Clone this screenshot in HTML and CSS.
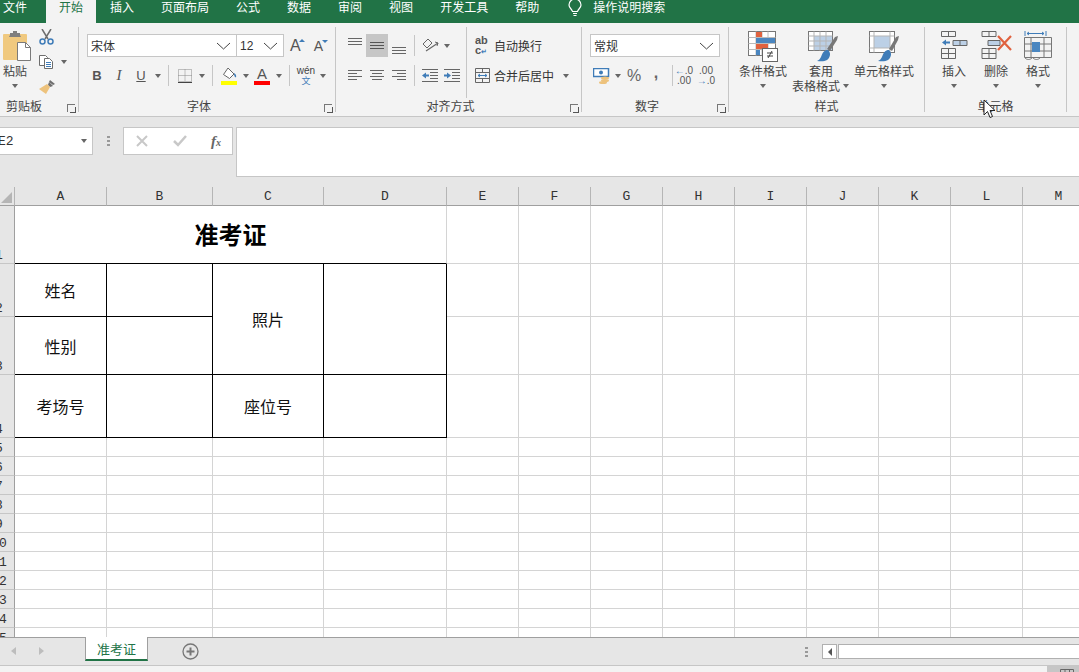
FILE: index.html
```html
<!DOCTYPE html>
<html lang="zh-CN">
<head>
  <meta charset="UTF-8">
  <title>准考证 - Excel</title>
  <link rel="stylesheet" href="styles.css">
</head>
<body>
<div class="app">

  <!-- 菜单栏 -->
  <div class="menu">
    <span class="tab tab-file">文件</span>
    <span class="tab active">开始</span>
    <span class="tab">插入</span>
    <span class="tab">页面布局</span>
    <span class="tab">公式</span>
    <span class="tab">数据</span>
    <span class="tab">审阅</span>
    <span class="tab">视图</span>
    <span class="tab">开发工具</span>
    <span class="tab">帮助</span>
    <svg class="bulb" width="14" height="17" viewBox="0 0 14 17" fill="none" stroke="#fff" stroke-width="1.2"><path d="M4.500 11.500C4 9 1 8 1 5a6 6 0 0 1 12 0c0 3-3 4-3.500 6.500z"/><path d="M5 13.500h4M5.500 15.500h3"/></svg>
    <span class="search">操作说明搜索</span>
  </div>

  <!-- 功能区 -->
  <div class="ribbon">

    <div class="group g-clip">
      <div class="body">
        <div class="big big-paste">
          <svg width="28" height="31" viewBox="0 0 28 31"><rect x="0" y="3" width="24" height="26" rx="1" fill="#f0c97f"/><path d="M7 4V2h3V0h4v2h3v2l1 2H6z" fill="#7f7f7f"/><path d="M14.500 11.500h8l5 5v13h-13z" fill="#fff" stroke="#7a7a7a"/><path d="M22.500 11.500v5h5" fill="none" stroke="#7a7a7a"/></svg>
          <span class="big-text">粘贴</span>
          <i class="caret big-caret"></i>
        </div>
        <div class="clip-tools">
          <svg width="15" height="16" viewBox="0 0 15 16" fill="none"><path d="M3 0l6 10M12 0L6 10" stroke="#6d6d6d" stroke-width="1.500"/><circle cx="3.500" cy="12.500" r="2.500" stroke="#3f7cb8" stroke-width="1.500"/><circle cx="11.500" cy="12.500" r="2.500" stroke="#3f7cb8" stroke-width="1.500"/></svg>
          <div class="clip-copy">
            <svg width="15" height="14" viewBox="0 0 15 14" fill="#fff" stroke="#6d6d6d"><path d="M.5.500h6l2 2v8h-8z"/><path d="M5.500 3.500h5l3 3v7h-8z"/><path d="M7 7.500h5M7 9.500h5M7 11.500h5" stroke="#3f7cb8"/></svg>
            <i class="caret"></i>
          </div>
          <svg width="17" height="16" viewBox="0 0 17 16"><path d="M10 3l4 4-3 1-2-2z" fill="#6d6d6d"/><path d="M11 1l5 4-2 1-4-3z" fill="#6d6d6d"/><path d="M8 5l3 3-4 7-7-5z" fill="#edc27c"/></svg>
        </div>
      </div>
      <div class="label">剪贴板</div>
      <i class="launch"></i>
    </div>

    <div class="group g-font">
      <div class="tools">
        <div class="row">
          <div class="combo c-name"><span>宋体</span><svg width="15" height="8" viewBox="0 0 15 8" fill="none" stroke="#444"><path d="M1 1l6.500 6L14 1"/></svg></div>
          <div class="combo c-size"><span>12</span><svg width="15" height="8" viewBox="0 0 15 8" fill="none" stroke="#444"><path d="M1 1l6.500 6L14 1"/></svg></div>
          <span class="grow">A<i class="up"></i></span>
          <span class="shrink">A<i class="down"></i></span>
        </div>
        <div class="row">
          <span class="btn fmt"><b>B</b></span>
          <span class="btn fmt"><em>I</em></span>
          <span class="btn fmt"><u>U</u></span>
          <span class="cb"><i class="caret"></i></span>
          <i class="sep"></i>
          <span class="btn"><svg width="14" height="14" viewBox="0 0 14 14" fill="none" stroke="#888" stroke-dasharray="1 1"><path d="M.5.500h13v12H.5zM7 .5v12M.5 6.500h13"/><path d="M0 13.500h14" stroke="#444" stroke-dasharray="none"/></svg></span>
          <span class="cb"><i class="caret"></i></span>
          <i class="sep"></i>
          <span class="btn"><svg width="16" height="18" viewBox="0 0 16 18"><path d="M7 1l6 6-4.500 4.500-6-4z" fill="#fff" stroke="#666"/><path d="M13 6c2 1 2.500 3 2 4.500-1.500-.5-2-2-2-4.500z" fill="#3f7cb8"/><rect y="14" width="16" height="4" fill="#ff0"/></svg></span>
          <span class="cb"><i class="caret"></i></span>
          <span class="btn"><span class="color-a">A</span></span>
          <span class="cb"><i class="caret"></i></span>
          <i class="sep"></i>
          <span class="btn wen"><span class="wen-top">wén</span><span class="wen-bot">文</span></span>
          <span class="cb"><i class="caret"></i></span>
        </div>
      </div>
      <div class="label">字体</div>
      <i class="launch"></i>
    </div>

    <div class="group g-align">
      <div class="align-wrap">
        <div class="tools align-left">
          <div class="row">
            <span class="btn"><svg width="14" height="18" viewBox="0 0 14 18" stroke="#666"><path d="M0 1.500h14M0 4.500h14M0 7.500h14"/></svg></span>
            <span class="btn selected"><svg width="14" height="18" viewBox="0 0 14 18" stroke="#555"><path d="M0 5.500h14M0 8.500h14M0 11.500h14"/></svg></span>
            <span class="btn"><svg width="14" height="18" viewBox="0 0 14 18" stroke="#666"><path d="M0 10.500h14M0 13.500h14M0 16.500h14"/></svg></span>
            <i class="sep"></i>
            <span class="btn"><svg width="17" height="15" viewBox="0 0 17 15" fill="none" stroke="#666"><path d="M1 6l5-5 4 4-5 5z"/><path d="M4 13L16 5" stroke-width="1.200"/><path d="M13 4l3 1-1 3"/></svg></span>
            <span class="cb"><i class="caret"></i></span>
          </div>
          <div class="row">
            <span class="btn"><svg width="14" height="11" viewBox="0 0 14 11" stroke="#666"><path d="M0 .5h14M0 3.500h9M0 6.500h14M0 9.500h9"/></svg></span>
            <span class="btn"><svg width="14" height="11" viewBox="0 0 14 11" stroke="#666"><path d="M0 .5h14M2 3.500h10M0 6.500h14M2 9.500h10"/></svg></span>
            <span class="btn"><svg width="14" height="11" viewBox="0 0 14 11" stroke="#666"><path d="M0 .5h14M5 3.500h9M0 6.500h14M5 9.500h9"/></svg></span>
            <i class="sep"></i>
            <span class="btn"><svg width="16" height="13" viewBox="0 0 16 13"><path d="M0 .5h16M8 3.500h8M8 6.500h8M8 9.500h8M0 12.500h16" stroke="#666"/><path d="M0 6.500l4-3v2h3v2H4v2z" fill="#3f7cb8"/></svg></span>
            <span class="btn"><svg width="16" height="13" viewBox="0 0 16 13"><path d="M0 .5h16M8 3.500h8M8 6.500h8M8 9.500h8M0 12.500h16" stroke="#666"/><path d="M7 6.500l-4-3v2H0v2h3v2z" fill="#3f7cb8"/></svg></span>
          </div>
        </div>
        <div class="tools align-right">
          <div class="row text-btn">
            <span class="wrap-ic"><span>ab</span><span>c<i>↵</i></span></span>
            <span>自动换行</span>
          </div>
          <div class="row text-btn">
            <svg class="merge-ic" width="15" height="15" viewBox="0 0 15 15" fill="none" stroke="#666"><path d="M.5.500h14v14H.5zM.5 4.500h14M.5 10.500h14M7.500.5v4M7.500 10.500v4"/><path d="M3 7.500h9M3 7.500l2-1.500M3 7.500L5 9M12 7.500L10 6M12 7.500L10 9" stroke="#3f7cb8"/></svg>
            <span>合并后居中</span>
            <i class="caret merge-caret"></i>
          </div>
        </div>
      </div>
      <div class="label">对齐方式</div>
      <i class="launch"></i>
    </div>

    <div class="group g-num">
      <div class="tools">
        <div class="row">
          <div class="combo c-num"><span>常规</span><svg width="15" height="8" viewBox="0 0 15 8" fill="none" stroke="#444"><path d="M1 1l6.500 6L14 1"/></svg></div>
        </div>
        <div class="row">
          <span class="btn"><svg width="17" height="16" viewBox="0 0 17 16"><rect x=".5" y=".5" width="15" height="8" fill="#fff" stroke="#3f7cb8" stroke-width="1.500"/><circle cx="8" cy="4.500" r="2" fill="#3f7cb8"/><ellipse cx="12" cy="10" rx="4" ry="1.500" fill="#edc27c"/><ellipse cx="12" cy="12.500" rx="4" ry="1.500" fill="#edc27c"/><ellipse cx="10" cy="14.500" rx="4" ry="1.500" fill="#edc27c"/></svg></span>
          <span class="cb"><i class="caret"></i></span>
          <span class="btn num-sym">%</span>
          <span class="btn num-sym comma">,</span>
          <i class="sep sep-dec"></i>
          <span class="dec"><span><i>←</i>.0</span><span>.00</span></span>
          <span class="dec"><span>.00</span><span><i>→</i>.0</span></span>
        </div>
      </div>
      <div class="label">数字</div>
      <i class="launch"></i>
    </div>

    <div class="group g-style">
      <div class="body">
        <div class="big b-cond">
          <svg width="30" height="31" viewBox="0 0 30 31"><rect x=".5" y=".5" width="27" height="24" fill="#fff" stroke="#777"/><path d="M8 .5v24M14 .5v24M20 .5v24M.5 6.500h27M.5 12.500h27M.5 18.500h27" stroke="#bbb"/><rect x="8" y="1" width="6" height="5" fill="#e0623f"/><rect x="8" y="7" width="19" height="5" fill="#4a86c0"/><rect x="8" y="13" width="12" height="5" fill="#e0623f"/><rect x="8" y="19" width="4" height="5" fill="#4a86c0"/><rect x="14.500" y="17.500" width="15" height="13" fill="#fff" stroke="#666"/><path d="M19 22h6M19 25h6M24 20l-4 7" stroke="#444" fill="none"/></svg>
          <span class="big-text">条件格式</span>
          <i class="caret big-caret"></i>
        </div>
        <div class="big b-table">
          <svg width="30" height="31" viewBox="0 0 30 31"><rect x=".5" y=".5" width="24" height="19" fill="#fff" stroke="#777"/><rect x="6" y="5" width="18" height="14" fill="#bcd0e6"/><path d="M6 .5v19M12 .5v19M18 .5v19M.5 5h24M.5 10h24M.5 15h24" stroke="#b5b5b5"/><path d="M19 18l8-12 3-1-1 4-7 11z" fill="#777"/><path d="M20 19c-4 0-5 2-7 7-1 2-2 3-4 4 7 1 12 0 13-6 .2-2-.5-4-2-5z" fill="#3f7cb8"/></svg>
          <span class="big-text table-top">套用</span>
          <span class="big-text table-line">表格格式<i class="caret"></i></span>
        </div>
        <div class="big b-cell">
          <svg width="30" height="31" viewBox="0 0 30 31"><rect x=".5" y=".5" width="25" height="21" fill="#fff" stroke="#777"/><rect x="5" y="5" width="16" height="12" fill="#bcd0e6"/><path d="M5 .5v21M21 .5v21M.5 5h25M.5 17h25" stroke="#b5b5b5"/><path d="M20 18l7-12 3-1-1 4-6 11z" fill="#777"/><path d="M20 19c-4 0-5 2-7 7-1 2-2 3-4 4 7 1 12 0 13-6 .2-2-.5-4-2-5z" fill="#3f7cb8"/></svg>
          <span class="big-text">单元格样式</span>
          <i class="caret big-caret"></i>
        </div>
      </div>
      <div class="label">样式</div>
    </div>

    <div class="group g-cells">
      <div class="body">
        <div class="big b-c">
          <svg width="27" height="31" viewBox="0 0 27 31" fill="none" stroke="#666"><path d="M.5.500h14v5H.5zM7.500.5v5M.5 17.500h14v10H.5zM.5 22.500h14M7.500 17.500v10"/><path d="M12 9.500h14v5H12zM19 9.500v5" fill="#bcd0e6"/><path d="M1 11.500l4-3v2h4v2H5v2z" fill="#3f7cb8" stroke="none"/></svg>
          <span class="big-text">插入</span>
          <i class="caret big-caret"></i>
        </div>
        <div class="big b-c">
          <svg width="31" height="31" viewBox="0 0 31 31" fill="none" stroke="#666"><path d="M1 .5h14v5H1zM8 .5v5M1 17.500h14v10H1zM1 22.500h14M8 17.500v10"/><path d="M7 9.500h12v5H7z" fill="#bcd0e6"/><path d="M17 5l13 14M30 5L17 19" stroke="#e0623f" stroke-width="2.200"/></svg>
          <span class="big-text">删除</span>
          <i class="caret big-caret"></i>
        </div>
        <div class="big b-c">
          <svg width="28" height="31" viewBox="0 0 28 31" fill="none"><path d="M1 0v5M22 0v5M3 2.500h17M3 2.500l2-1.500M3 2.500L5 4M20 2.500L18 1M20 2.500L18 4" stroke="#3f7cb8"/><path d="M.5 6.500h27v20H.5zM7 6.500v20M20 6.500v20M.5 13h27M.5 20h27" stroke="#777"/><rect x="8" y="11" width="8" height="10" fill="#4a86c0"/><path d="M1 27c2 2 5 2 7 0M9 27c2 2 5 2 7 0" stroke="#777"/></svg>
          <span class="big-text">格式</span>
          <i class="caret big-caret"></i>
        </div>
      </div>
      <div class="label">单元格</div>
    </div>
  </div>

  <!-- 编辑栏 -->
  <div class="formula">
    <div class="namebox"><span>E2</span><i class="caret"></i></div>
    <span class="vdots"></span>
    <div class="fxbox">
      <svg width="14" height="12" viewBox="0 0 14 12" fill="none" stroke="#c8c8c8" stroke-width="2"><path d="M2 1l10 10M12 1L2 11"/></svg>
      <svg width="14" height="12" viewBox="0 0 14 12" fill="none" stroke="#c8c8c8" stroke-width="2.500"><path d="M1 6l4 4 8-9"/></svg>
      <span class="fx">f<small>x</small></span>
    </div>
    <div class="fxinput"></div>
  </div>

  <!-- 工作表 -->
  <div class="sheet-wrap">
    <div class="sheet">
      <div class="corner"><i></i></div><div class="ch">A</div><div class="ch">B</div><div class="ch">C</div><div class="ch">D</div><div class="ch">E</div><div class="ch">F</div><div class="ch">G</div><div class="ch">H</div><div class="ch">I</div><div class="ch">J</div><div class="ch">K</div><div class="ch">L</div><div class="ch">M</div>

      <div class="rh"><span>1</span></div><div class="title">准考证</div><div></div><div></div><div></div><div></div><div></div><div></div><div></div><div></div><div></div>
      <div class="rh"><span>2</span></div><div class="b">姓名</div><div class="b"></div><div class="b tall">照片</div><div class="b tall"></div><div></div><div></div><div></div><div></div><div></div><div></div><div></div><div></div><div></div>
      <div class="rh"><span>3</span></div><div class="b">性别</div><div class="b"></div><div></div><div></div><div></div><div></div><div></div><div></div><div></div><div></div><div></div>
      <div class="rh"><span>4</span></div><div class="b">考场号</div><div class="b"></div><div class="b">座位号</div><div class="b"></div><div></div><div></div><div></div><div></div><div></div><div></div><div></div><div></div><div></div>
      <div class="rh"><span>5</span></div><div></div><div></div><div></div><div></div><div></div><div></div><div></div><div></div><div></div><div></div><div></div><div></div><div></div>
      <div class="rh"><span>6</span></div><div></div><div></div><div></div><div></div><div></div><div></div><div></div><div></div><div></div><div></div><div></div><div></div><div></div>
      <div class="rh"><span>7</span></div><div></div><div></div><div></div><div></div><div></div><div></div><div></div><div></div><div></div><div></div><div></div><div></div><div></div>
      <div class="rh"><span>8</span></div><div></div><div></div><div></div><div></div><div></div><div></div><div></div><div></div><div></div><div></div><div></div><div></div><div></div>
      <div class="rh"><span>9</span></div><div></div><div></div><div></div><div></div><div></div><div></div><div></div><div></div><div></div><div></div><div></div><div></div><div></div>
      <div class="rh"><span>10</span></div><div></div><div></div><div></div><div></div><div></div><div></div><div></div><div></div><div></div><div></div><div></div><div></div><div></div>
      <div class="rh"><span>11</span></div><div></div><div></div><div></div><div></div><div></div><div></div><div></div><div></div><div></div><div></div><div></div><div></div><div></div>
      <div class="rh"><span>12</span></div><div></div><div></div><div></div><div></div><div></div><div></div><div></div><div></div><div></div><div></div><div></div><div></div><div></div>
      <div class="rh"><span>13</span></div><div></div><div></div><div></div><div></div><div></div><div></div><div></div><div></div><div></div><div></div><div></div><div></div><div></div>
      <div class="rh"><span>14</span></div><div></div><div></div><div></div><div></div><div></div><div></div><div></div><div></div><div></div><div></div><div></div><div></div><div></div>
      <div class="rh"><span>15</span></div><div></div><div></div><div></div><div></div><div></div><div></div><div></div><div></div><div></div><div></div><div></div><div></div><div></div>
    </div>
  </div>

  <!-- 工作表标签 -->
  <div class="tabbar">
    <i class="nav nav-l"></i>
    <i class="nav nav-r"></i>
    <span class="sheet-tab">准考证</span>
    <svg class="add" width="17" height="17" viewBox="0 0 17 17" fill="none" stroke="#777"><circle cx="8.500" cy="8.500" r="7.500" stroke-width="1.300"/><path d="M8.500 4.500v8M4.500 8.500h8" stroke-width="2"/></svg>
    <span class="vdots tab-dots"></span>
    <span class="scroll-l"><i></i></span>
    <span class="scroll-thumb"></span>
  </div>
  <div class="status">
    <i class="status-mark"></i>
    <span class="view-btn"><svg width="14" height="6" viewBox="0 0 14 6" fill="none" stroke="#666"><path d="M.5 6V.5h13V6M5 .5V6M9.500.5V6"/></svg></span>
  </div>

  <svg class="cursor" width="13" height="20" viewBox="0 0 13 20"><path d="M1 1v15l3.500-3.500 2.500 6 2.500-1-2.500-6H12z" fill="#fff" stroke="#222"/></svg>
</div>
</body>
</html>
```
FILE: styles.css
```css
* {
  box-sizing: border-box;
}
html, body {
  margin: 0;
  height: 100%;
  overflow: hidden;
}
body {
  font-family: "Noto Sans CJK SC", "Liberation Sans", sans-serif;
  font-size: 12px;
  color: #444;
}
i {
  font-style: normal;
}
.app {
  position: relative;
  height: 672px;
  display: flex;
  flex-direction: column;
  background-color: #e6e6e6;
}

/* menu */
.menu {
  height: 23px;
  flex: none;
  display: flex;
  align-items: flex-start;
  background-color: #217346;
  color: #fff;
}
.tab {
  height: 23px;
  line-height: 14px;
  padding: 0 13px;
  margin-right: 1px;
}
.tab-file {
  margin-left: -10px;
  margin-right: 6px;
}
.tab.active {
  background-color: #f3f3f3;
  color: #217346;
}
.bulb {
  margin: 0 0 0 15px;
}
.search {
  margin-left: 11px;
  line-height: 14px;
}

/* ribbon */
.ribbon {
  height: 94px;
  flex: none;
  display: flex;
  padding: 4px 0 4px;
  background-color: #f3f3f3;
  border-bottom: 1px solid #c6c6c6;
}
.group {
  position: relative;
  height: 85px;
  flex: none;
  display: flex;
  flex-direction: column;
  border-right: 1px solid #c6c6c6;
}
.g-clip { width: 79px; }
.g-font { width: 257px; padding-left: 7px; }
.g-align { width: 246px; padding-left: 8px; }
.g-num { width: 147px; padding-left: 8px; }
.g-style { width: 196px; padding-left: 5px; }
.g-cells { width: 142px; padding-left: 8px; }
.body {
  height: 71px;
  display: flex;
}
.label {
  height: 14px;
  line-height: 14px;
  text-align: center;
  margin-top: auto;
  margin-bottom: -1px;
}
.g-clip .label { padding-right: 30px; }
.g-font .label { margin-left: -7px; padding-right: 16px; }
.g-align .label { margin-left: -8px; padding-right: 16px; }
.g-num .label { margin-left: -8px; padding-right: 16px; }
.g-style .label { margin-left: -5px; }
.g-cells .label { margin-left: -8px; }
.g-font .tools, .g-align .tools, .g-num .tools {
  height: 71px;
}
.launch {
  position: absolute;
  right: 3px;
  bottom: 0;
  width: 8px;
  height: 8px;
  border: solid #777;
  border-width: 1px 0 0 1px;
}
.launch::after {
  content: "";
  position: absolute;
  right: -1px;
  bottom: -1px;
  width: 5px;
  height: 5px;
  border: solid #555;
  border-width: 0 1px 1px 0;
}
.caret {
  display: inline-block;
  width: 0;
  height: 0;
  border: 3.500px solid transparent;
  border-top: 4px solid #666;
  border-bottom: 0;
}
.tools {
  display: flex;
  flex-direction: column;
  gap: 7px;
  padding-top: 7px;
}
.row {
  height: 23px;
  display: flex;
  align-items: center;
}
.btn {
  width: 22px;
  height: 23px;
  flex: none;
  display: flex;
  align-items: center;
  justify-content: center;
}
.selected {
  background-color: #c6c6c6;
}
.cb {
  width: 11px;
  flex: none;
  display: flex;
  justify-content: center;
}
.sep {
  width: 1px;
  height: 21px;
  flex: none;
  margin: 0 5px;
  background-color: #c6c6c6;
}

/* clipboard */
.big {
  display: flex;
  flex-direction: column;
  align-items: center;
  padding-top: 4px;
}
.big svg {
  flex: none;
}
.big-text {
  line-height: 15px;
  margin-top: 1px;
  white-space: nowrap;
}
.big-text + .big-text {
  margin-top: 0;
}
.big-caret {
  margin-top: 6px;
}
.big-paste {
  width: 33px;
  padding-left: 3px;
  align-items: flex-start;
}
.big-paste .big-caret {
  margin-left: 9px;
}
.clip-tools {
  display: flex;
  flex-direction: column;
  gap: 10px;
  padding: 2px 0 0 6px;
}
.clip-copy {
  display: flex;
  align-items: center;
  gap: 7px;
}

/* font */
.combo {
  height: 23px;
  display: flex;
  align-items: center;
  justify-content: space-between;
  padding: 0 5px 0 3px;
  background-color: #fff;
  border: 1px solid #c6c6c6;
  font-size: 12px;
  color: #333;
}
.c-name { width: 150px; margin-left: 1px; }
.c-size { width: 48px; margin-left: -1px; font-family: "Liberation Sans", sans-serif; }
.c-num { width: 130px; }
.grow, .shrink {
  position: relative;
  font-family: "Liberation Sans", sans-serif;
  color: #555;
}
.grow {
  margin-left: 6px;
  font-size: 16px;
}
.shrink {
  margin-left: 13px;
  font-size: 14px;
}
.up, .down {
  position: absolute;
  top: 2px;
  left: 9px;
  border: 3px solid transparent;
  border-bottom: 3px solid #3f7cb8;
  border-top: 0;
}
.down {
  left: 8px;
  border-bottom: 0;
  border-top: 3px solid #3f7cb8;
}
.fmt {
  font-family: "Liberation Sans", sans-serif;
  font-size: 13px;
  color: #555;
}
.fmt em {
  font-family: "Liberation Serif", serif;
  font-size: 15px;
}
.color-a {
  width: 16px;
  height: 18px;
  line-height: 14px;
  text-align: center;
  font-family: "Liberation Sans", sans-serif;
  font-size: 15px;
  color: #555;
  border-bottom: 4px solid #f00;
}
.wen {
  flex-direction: column;
  line-height: 10px;
}
.wen-top {
  font-family: "Liberation Sans", sans-serif;
  font-size: 10px;
}
.wen-bot {
  font-size: 9px;
  color: #3f7cb8;
}

/* alignment */
.align-wrap {
  display: flex;
  height: 71px;
}
.align-left {
  width: 123px;
  border-right: 1px solid #c6c6c6;
  height: 64px;
  margin-bottom: 7px;
}
.align-left .sep {
  margin: 0 4px;
}
.align-right {
  padding-left: 8px;
}
.text-btn {
  gap: 4px;
  white-space: nowrap;
  color: #333;
}
.wrap-ic {
  width: 15px;
  display: flex;
  flex-direction: column;
  line-height: 10px;
  font-family: "Liberation Sans", sans-serif;
  font-size: 11px;
  font-weight: bold;
  color: #555;
}
.wrap-ic i {
  color: #3f7cb8;
  font-size: 7px;
}
.merge-caret {
  margin-left: 5px;
}

/* number */
.num-sym {
  font-family: "Liberation Sans", sans-serif;
  font-size: 16px;
  color: #666;
}
.comma {
  font-weight: bold;
  padding-bottom: 6px;
}
.sep-dec {
  margin-right: 0;
}
.dec {
  width: 22px;
  flex: none;
  display: flex;
  flex-direction: column;
  align-items: center;
  line-height: 10px;
  font-family: "Liberation Sans", sans-serif;
  font-size: 10px;
  color: #555;
}
.dec i {
  color: #3f7cb8;
}

/* styles and cells */
.b-cond { width: 58px; }
.b-table { width: 62px; }
.b-cell { width: 60px; }
.b-c { width: 42px; }
.table-top {
  margin-right: 4px;
}
.table-line {
  position: relative;
  margin-right: 14px;
}
.table-line .caret {
  position: absolute;
  left: 51px;
  top: 6px;
}

/* formula bar */
.formula {
  height: 70px;
  flex: none;
  display: flex;
  align-items: flex-start;
  padding-top: 10px;
  background-color: #e6e6e6;
}
.namebox {
  width: 93px;
  height: 28px;
  display: flex;
  align-items: center;
  justify-content: space-between;
  padding-right: 5px;
  background-color: #fff;
  border: 1px solid #c6c6c6;
  border-left: 0;
  font-family: "Liberation Mono", monospace;
  font-size: 13px;
  color: #333;
}
.namebox span {
  margin-left: -2px;
}
.vdots {
  width: 3px;
  height: 11px;
  flex: none;
  background-image: radial-gradient(circle, #999 1.300px, transparent 1.500px);
  background-size: 3px 4px;
}
.formula .vdots {
  margin: 8px 13px 0 14px;
}
.fxbox {
  width: 110px;
  height: 28px;
  display: flex;
  align-items: center;
  justify-content: space-between;
  padding: 0 11px;
  background-color: #fff;
  border: 1px solid #c6c6c6;
}
.fx {
  font-family: "Liberation Serif", serif;
  font-style: italic;
  font-weight: bold;
  font-size: 15px;
  color: #666;
}
.fx small {
  font-size: 10px;
}
.fxinput {
  flex: 1;
  height: 50px;
  margin-left: 3px;
  background-color: #fff;
  border: 1px solid #c6c6c6;
  border-right: 0;
}

/* sheet */
.sheet-wrap {
  height: 450px;
  flex: none;
  overflow: hidden;
  background-color: #fff;
}
.sheet {
  display: grid;
  grid-template-columns: 15px 92px 106px 111px 123px repeat(9, 72px);
  grid-template-rows: 19px 58px 53px 58px 63px repeat(11, 19px);
  font-size: 16px;
  color: #111;
}
.sheet > div {
  display: flex;
  align-items: center;
  justify-content: center;
  min-width: 0;
  border-right: 1px solid #d4d4d4;
  border-bottom: 1px solid #d4d4d4;
}
.sheet > .ch, .sheet > .corner, .sheet > .rh {
  background-color: #e6e6e6;
  font-family: "Liberation Mono", monospace;
  font-size: 13px;
  color: #333;
  border-right-color: #b5b5b5;
  border-bottom-color: #9f9f9f;
}
.sheet > .corner {
  align-items: flex-end;
  justify-content: flex-end;
  padding: 0 2px 2px 0;
}
.corner i {
  width: 0;
  height: 0;
  border-left: 11px solid transparent;
  border-bottom: 11px solid #b5b5b5;
}
.sheet > .rh {
  align-items: flex-end;
  justify-content: flex-start;
  overflow: hidden;
  border-right-color: #9f9f9f;
  border-bottom-color: #c6c6c6;
}
.rh span {
  flex: none;
  width: 26px;
  margin-left: -14px;
  line-height: 15px;
  text-align: center;
  font-size: 13px;
}
.sheet > .title {
  grid-column: span 4;
  padding-bottom: 3px;
  font-size: 24px;
  font-weight: bold;
  color: #000;
  border-bottom-color: #000;
}
.sheet > .b {
  border-color: #000;
}
.sheet > .tall {
  grid-row: span 2;
}

/* sheet tabs */
.tabbar {
  height: 28px;
  flex: none;
  position: relative;
  display: flex;
  align-items: flex-start;
  background-color: #e6e6e6;
  border-top: 1px solid #9f9f9f;
}
.nav {
  width: 0;
  height: 0;
  margin-top: 9px;
  border: 4px solid transparent;
}
.nav-l {
  margin-left: 11px;
  border-left: 0;
  border-right: 5px solid #bdbdbd;
}
.nav-r {
  margin-left: 23px;
  border-right: 0;
  border-left: 5px solid #bdbdbd;
}
.sheet-tab {
  width: 63px;
  height: 24px;
  margin-left: 41px;
  margin-top: -1px;
  line-height: 23px;
  text-align: center;
  font-size: 13px;
  color: #217346;
  background-color: #fff;
  border: 1px solid #9f9f9f;
  border-top: 0;
  border-bottom: 2px solid #217346;
}
.add {
  margin: 5px 0 0 34px;
}
.tab-dots {
  margin: 8px 0 0 606px;
}
.scroll-l {
  width: 15px;
  height: 15px;
  margin: 6px 0 0 14px;
  display: flex;
  align-items: center;
  justify-content: center;
  background-color: #fff;
  border: 1px solid #b0b0b0;
}
.scroll-l i {
  border: 4px solid transparent;
  border-left: 0;
  border-right: 4px solid #555;
}
.scroll-thumb {
  flex: 1;
  height: 15px;
  margin: 6px 0 0 1px;
  background-color: #fff;
  border: 1px solid #b0b0b0;
  border-right: 0;
}

/* status bar */
.status {
  flex: 1;
  display: flex;
  justify-content: space-between;
  align-items: flex-end;
  background-color: #f3f3f3;
  border-top: 1px solid #c6c6c6;
}
.status-mark {
  width: 7px;
  height: 2px;
  background-color: #666;
}
.view-btn {
  width: 32px;
  height: 100%;
  display: flex;
  justify-content: center;
  padding: 3px 0 0 8px;
  overflow: hidden;
  background-color: #c6c6c6;
}

/* mouse pointer */
.cursor {
  position: absolute;
  left: 983px;
  top: 99px;
}
```
